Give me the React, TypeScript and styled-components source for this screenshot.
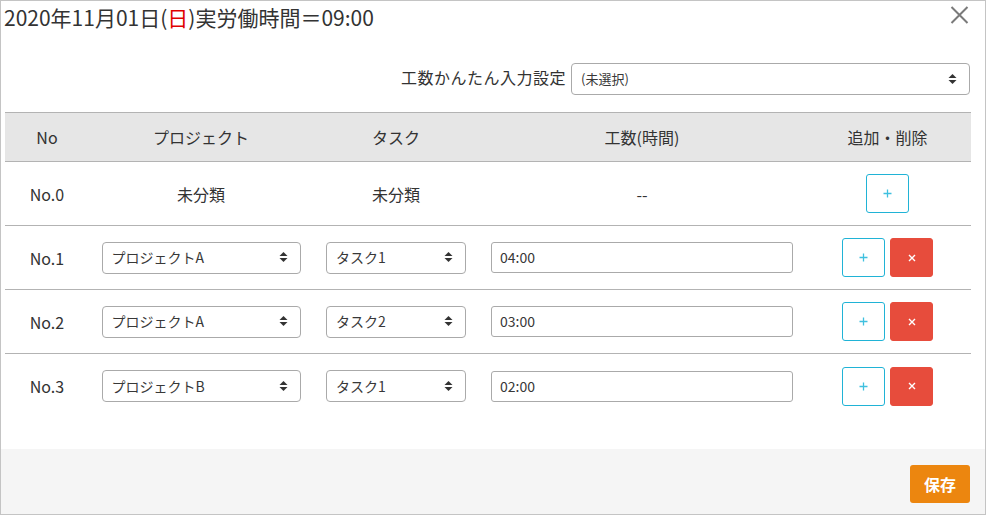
import React from "react";
import styled, { createGlobalStyle } from "styled-components";

const Global = createGlobalStyle`
  html, body { margin: 0; padding: 0; background: #fff; }
  body { font-family: "Noto Sans CJK JP", "Noto Sans", sans-serif; color: #333; }
  * { box-sizing: border-box; }
`;

const Modal = styled.div`
  width: 986px;
  height: 515px;
  border: 1px solid #c4c4c4;
  display: flex;
  flex-direction: column;
  background: #fff;
`;

const Header = styled.div`
  display: flex;
  justify-content: space-between;
  align-items: flex-start;
  padding: 0 16px 0 3px;
  height: 40px;
`;

const Title = styled.h1`
  margin: 0;
  font-size: 21px;
  font-weight: 400;
  line-height: 33px;
  color: #333;
`;

const Sun = styled.span`
  color: #e00000;
`;

const Close = styled.button`
  border: none;
  background: none;
  padding: 0;
  margin-top: 4px;
  width: 20px;
  height: 20px;
  cursor: pointer;
  display: flex;
  align-items: center;
  justify-content: center;
`;

const SettingRow = styled.div`
  display: flex;
  justify-content: flex-end;
  align-items: center;
  gap: 5px;
  padding: 0 15px 0 0;
  margin-top: 22px;
`;

const Label = styled.label`
  font-size: 16px;
  color: #333;
  line-height: 24px;
  margin-bottom: 4px;
  letter-spacing: 0.5px;
`;

const SelectBox = styled.div<{ $w: number; $h?: number; $fs?: number }>`
  position: relative;
  width: ${(p) => p.$w}px;
  height: ${(p) => p.$h ?? 32}px;
  border: 1px solid #aaa;
  border-radius: 4px;
  background: #fff;
  display: flex;
  align-items: center;
  padding: 0 12px 1px 9px;
  font-size: ${(p) => p.$fs ?? 14}px;
  color: #383838;
  justify-content: space-between;
`;

const Table = styled.div`
  margin: 17px 14px 0 4px;
  border-top: 1px solid #b3b3b3;
`;

const Row = styled.div<{ $head?: boolean; $last?: boolean }>`
  display: grid;
  grid-template-columns: 84px 224px 166px 326px 165px;
  align-items: center;
  height: ${(p) => (p.$head ? 49 : 64)}px;
  background: ${(p) => (p.$head ? "#e6e6e6" : "#fff")};
  border-bottom: ${(p) => (p.$last ? "none" : "1px solid #b3b3b3")};
  font-size: 16px;
  color: #333;
`;

const Cell = styled.div`
  display: flex;
  justify-content: center;
  align-items: center;
  gap: 5px;
`;

const Input = styled.div`
  width: 302px;
  height: 31px;
  border: 1px solid #aaa;
  border-radius: 3px;
  font-size: 14px;
  padding: 0 8px 1px;
  display: flex;
  align-items: center;
  color: #383838;
`;

const ActionBtn = styled.button<{ $kind: "add" | "del" }>`
  width: 43px;
  height: 39px;
  border-radius: 3px;
  border: 1px solid ${(p) => (p.$kind === "add" ? "#20b3d6" : "#e74c3c")};
  background: ${(p) => (p.$kind === "add" ? "#fff" : "#e74c3c")};
  display: flex;
  align-items: center;
  justify-content: center;
  padding: 0;
  cursor: pointer;
`;

const Spacer = styled.div`
  flex: 1;
`;

const Footer = styled.div`
  height: 65px;
  background: #f5f5f5;
  display: flex;
  justify-content: flex-end;
  align-items: flex-start;
  padding: 16px 15px 0 0;
`;

const SaveBtn = styled.button`
  width: 60px;
  height: 38px;
  border: none;
  border-radius: 3px;
  background: #ec860f;
  color: #fff;
  font-family: "Noto Sans CJK JP", sans-serif;
  font-size: 16px;
  font-weight: 700;
  cursor: pointer;
`;

const Arrows = () => (
  <svg width="9" height="12" viewBox="0 0 9 12">
    <path d="M0.5 5 L4.5 1 L8.5 5 Z" fill="#333" />
    <path d="M0.5 7 L4.5 11 L8.5 7 Z" fill="#333" />
  </svg>
);

const Select = ({ w, text }: { w: number; text: string }) => (
  <SelectBox $w={w}>
    <span>{text}</span>
    <Arrows />
  </SelectBox>
);

const Plus = () => (
  <svg width="9" height="9" viewBox="0 0 9 9">
    <path d="M4.5 0.5 V8.5 M0.5 4.5 H8.5" stroke="#3fc0df" strokeWidth="1.3" />
  </svg>
);

const Cross = () => (
  <svg width="8" height="8" viewBox="0 0 8 8">
    <path d="M1 1 L7 7 M7 1 L1 7" stroke="#fff" strokeWidth="1.4" />
  </svg>
);

const rows = [
  { no: "No.1", project: "プロジェクトA", task: "タスク1", hours: "04:00" },
  { no: "No.2", project: "プロジェクトA", task: "タスク2", hours: "03:00" },
  { no: "No.3", project: "プロジェクトB", task: "タスク1", hours: "02:00" },
];

export default function App() {
  return (
    <>
      <Global />
      <Modal>
        <Header>
          <Title>
            2020年11月01日(<Sun>日</Sun>)実労働時間＝09:00
          </Title>
          <Close aria-label="close">
            <svg width="19" height="18" viewBox="0 0 19 18">
              <path d="M1.5 1 L17.5 17 M17.5 1 L1.5 17" stroke="#7a7a7a" strokeWidth="2" />
            </svg>
          </Close>
        </Header>
        <SettingRow>
          <Label>工数かんたん入力設定</Label>
          <SelectBox $w={399} $h={32} $fs={13}>
            <span>(未選択)</span>
            <Arrows />
          </SelectBox>
        </SettingRow>
        <Table>
          <Row $head>
            <Cell>No</Cell>
            <Cell>プロジェクト</Cell>
            <Cell>タスク</Cell>
            <Cell>工数(時間)</Cell>
            <Cell>追加・削除</Cell>
          </Row>
          <Row>
            <Cell>No.0</Cell>
            <Cell>未分類</Cell>
            <Cell>未分類</Cell>
            <Cell>--</Cell>
            <Cell>
              <ActionBtn $kind="add">
                <Plus />
              </ActionBtn>
            </Cell>
          </Row>
          {rows.map((r, i) => (
            <Row key={r.no} $last={i === rows.length - 1}>
              <Cell>{r.no}</Cell>
              <Cell>
                <Select w={199} text={r.project} />
              </Cell>
              <Cell>
                <Select w={140} text={r.task} />
              </Cell>
              <Cell>
                <Input>{r.hours}</Input>
              </Cell>
              <Cell>
                <ActionBtn $kind="add">
                  <Plus />
                </ActionBtn>
                <ActionBtn $kind="del">
                  <Cross />
                </ActionBtn>
              </Cell>
            </Row>
          ))}
        </Table>
        <Spacer />
        <Footer>
          <SaveBtn>保存</SaveBtn>
        </Footer>
      </Modal>
    </>
  );
}
